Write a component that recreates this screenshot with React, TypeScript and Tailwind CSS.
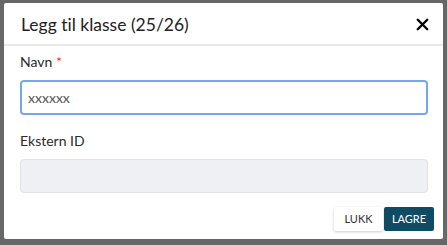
import { X } from 'lucide-react'

export default function App() {
  return (
    <div className="w-[447px] h-[245px] bg-[#676767] pt-[3px] pl-[4px] font-['Lato',sans-serif] [font-variant-ligatures:none]">
      <div className="w-[439px] h-[236px] bg-white rounded-[2px] flex flex-col">
        <div className="h-[43px] flex items-center justify-between pl-[17px] pr-[9px] border-b-2 border-[#e9e9e9]">
          <h2 className="text-[17.5px] text-[#222] pt-[4px]">Legg til klasse (25/26)</h2>
          <button className="w-[24px] h-[24px] flex items-center justify-center mt-[2px]">
            <X className="w-[19px] h-[19px] text-black" strokeWidth={3} />
          </button>
        </div>
        <div className="px-[16px] pt-[6px]">
          <label className="block text-[14px] leading-[20px] text-[#2b2b2b] mb-[8px]">
            Navn <span className="text-[#e53935]">*</span>
          </label>
          <input
            defaultValue="xxxxxx"
            className="w-[408px] h-[35px] rounded-[4px] border-2 border-[#74a7f0] px-[6px] text-[14px] text-[#555] outline-none"
          />
          <label className="block text-[14px] leading-[20px] text-[#2b2b2b] mt-[16px] mb-[8px]">Ekstern ID</label>
          <input
            disabled
            className="w-[408px] h-[34px] rounded-[4px] border border-[#e1e3e7] bg-[#eef0f3] px-[8px] text-[13px]"
          />
        </div>
        <div className="flex justify-end gap-[1px] pr-[9px] mt-[14px]">
          <button className="w-[49px] h-[24px] rounded-[2px] bg-white text-[11px] text-[#333] shadow-[0_1px_3px_rgba(0,0,0,0.2)]">
            LUKK
          </button>
          <button className="w-[50px] h-[24px] rounded-[2px] bg-[#0f4b62] text-[11px] text-white">
            LAGRE
          </button>
        </div>
      </div>
    </div>
  )
}
